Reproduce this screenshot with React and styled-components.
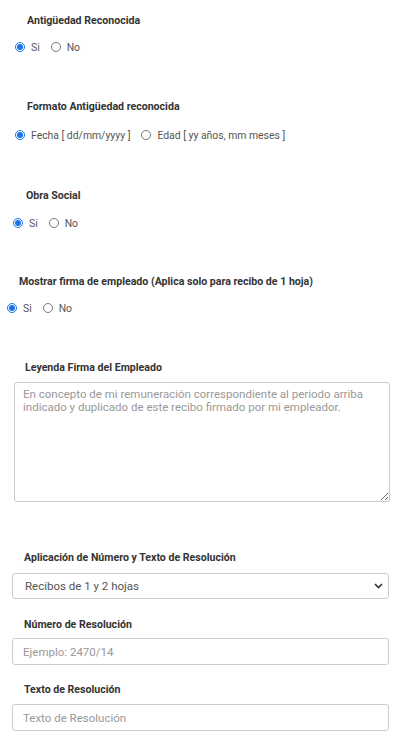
import React from "react";
import styled, { createGlobalStyle } from "styled-components";

const GlobalStyle = createGlobalStyle`
  html, body {
    margin: 0;
    padding: 0;
    background: #fff;
    font-family: Roboto, "Liberation Sans", Arial, sans-serif;
  }
`;

const Page = styled.div`
  width: 414px;
  padding-top: 14px;
  display: flex;
  flex-direction: column;
`;

const Group = styled.div`
  display: flex;
  flex-direction: column;
  margin-top: ${({ $top }) => $top || 0}px;
`;

const Label = styled.div`
  font-size: 10.6px;
  line-height: 14px;
  font-weight: 700;
  color: #333;
  padding-left: ${({ $indent }) => $indent}px;
  margin-bottom: ${({ $gap }) => $gap}px;
`;

const RadioRow = styled.div`
  display: flex;
  align-items: center;
  height: 14px;
  padding-left: ${({ $indent }) => $indent}px;
  gap: 11px;
`;

const RadioOption = styled.label`
  display: flex;
  align-items: center;
  gap: 6px;
  font-size: 10.4px;
  color: #555;
`;

const RadioInput = styled.input`
  width: 10px;
  height: 10px;
  margin: 0;
  accent-color: #1a73e8;
`;

const TextArea = styled.textarea`
  box-sizing: border-box;
  width: 376px;
  height: 120px;
  margin-left: ${({ $indent }) => $indent}px;
  padding: 5px 8px;
  border: 1px solid #ccc;
  border-radius: 3px;
  font-family: Roboto, "Liberation Sans", Arial, sans-serif;
  font-size: 11.5px;
  line-height: 13px;
  color: #555;
  resize: vertical;
  &::placeholder {
    color: #999;
  }
`;

const SelectWrap = styled.div`
  position: relative;
  width: 377px;
  margin-left: ${({ $indent }) => $indent}px;
`;

const Select = styled.select`
  box-sizing: border-box;
  width: 100%;
  height: 26px;
  padding: 0 10px 0 12px;
  border: 1px solid #ccc;
  border-radius: 3px;
  background: #fff;
  appearance: none;
  font-family: Roboto, "Liberation Sans", Arial, sans-serif;
  font-size: 11.5px;
  color: #555;
`;

const Chevron = styled.svg`
  position: absolute;
  right: 6px;
  top: 10px;
  pointer-events: none;
`;

const Input = styled.input`
  box-sizing: border-box;
  width: 377px;
  height: 27px;
  margin-left: ${({ $indent }) => $indent}px;
  padding: 0 10px;
  border: 1px solid #ccc;
  border-radius: 3px;
  font-family: Roboto, "Liberation Sans", Arial, sans-serif;
  font-size: 11.5px;
  color: #555;
  &::placeholder {
    color: #999;
  }
`;

const RadioGroup = ({ name, indent, options, checked }) => (
  <RadioRow $indent={indent}>
    {options.map((opt, i) => (
      <RadioOption key={opt}>
        <RadioInput type="radio" name={name} defaultChecked={i === checked} />
        {opt}
      </RadioOption>
    ))}
  </RadioRow>
);

const App = () => {
  return (
    <>
      <GlobalStyle />
      <Page>
        <Group>
          <Label $indent={27} $gap={12}>Antigüedad Reconocida</Label>
          <RadioGroup name="antiguedad" indent={15} options={["Si", "No"]} checked={0} />
        </Group>

        <Group $top={46}>
          <Label $indent={27} $gap={14}>Formato Antigüedad reconocida</Label>
          <RadioGroup
            name="formato"
            indent={15}
            options={["Fecha [ dd/mm/yyyy ]", "Edad [ yy años, mm meses ]"]}
            checked={0}
          />
        </Group>

        <Group $top={47}>
          <Label $indent={26} $gap={13}>Obra Social</Label>
          <RadioGroup name="obra" indent={13} options={["Si", "No"]} checked={0} />
        </Group>

        <Group $top={45}>
          <Label $indent={19} $gap={12}>Mostrar firma de empleado (Aplica solo para recibo de 1 hoja)</Label>
          <RadioGroup name="firma" indent={7} options={["Si", "No"]} checked={0} />
        </Group>

        <Group $top={46}>
          <Label $indent={25} $gap={7}>Leyenda Firma del Empleado</Label>
          <TextArea
            $indent={14}
            placeholder="En concepto de mi remuneración correspondiente al periodo arriba indicado y duplicado de este recibo firmado por mi empleador."
          />
        </Group>

        <Group $top={49}>
          <Label $indent={24} $gap={8}>Aplicación de Número y Texto de Resolución</Label>
          <SelectWrap $indent={12}>
            <Select defaultValue="1y2">
              <option value="1y2">Recibos de 1 y 2 hojas</option>
              <option value="1">Recibos de 1 hoja</option>
              <option value="2">Recibos de 2 hojas</option>
            </Select>
            <Chevron width="9" height="6" viewBox="0 0 9 6">
              <path d="M1 1l3.5 3.5L8 1" fill="none" stroke="#333" strokeWidth="1.6" />
            </Chevron>
          </SelectWrap>
        </Group>

        <Group $top={19}>
          <Label $indent={24} $gap={6}>Número de Resolución</Label>
          <Input $indent={12} placeholder="Ejemplo: 2470/14" />
        </Group>

        <Group $top={18}>
          <Label $indent={24} $gap={7}>Texto de Resolución</Label>
          <Input $indent={12} placeholder="Texto de Resolución" />
        </Group>
      </Page>
    </>
  );
};

export default App;
